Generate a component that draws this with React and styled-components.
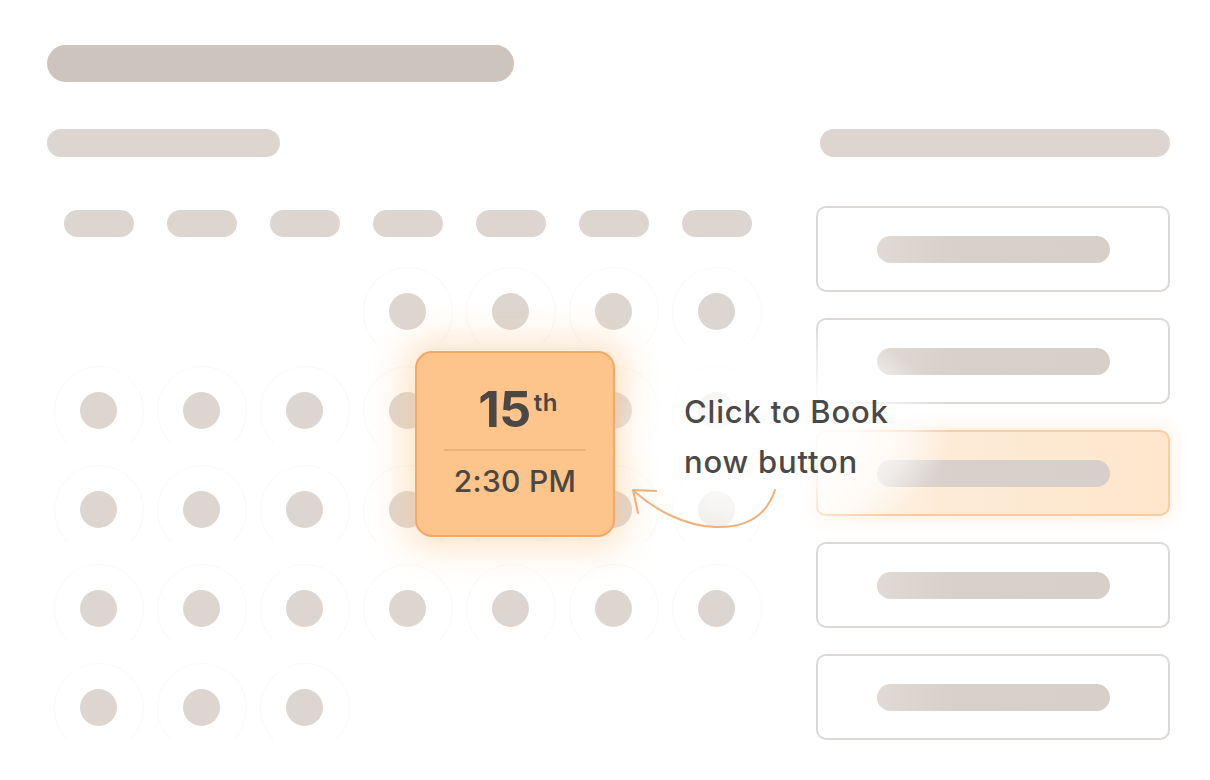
import React from 'react'
import styled, { createGlobalStyle } from 'styled-components'

const GlobalStyle = createGlobalStyle`
    html, body {
        margin: 0;
        padding: 0;
        background: #ffffff;
        font-family: Inter, "Liberation Sans", sans-serif;
    }
`

const Page = styled.div`
    position: relative;
    width: 1210px;
    height: 780px;
    box-sizing: border-box;
    padding: 45px 40px 0 47px;
    overflow: hidden;
`

const Bar = styled.div`
    width: ${p => p.w}px;
    height: ${p => p.h || 27}px;
    border-radius: 999px;
    background: ${p => p.color || '#ddd6d0'};
    margin-left: ${p => p.ml || 0}px;
`

const Body = styled.div`
    display: flex;
    gap: 48px;
    margin-top: 47px;
`

const Calendar = styled.div`
    width: 721px;
    display: flex;
    flex-direction: column;
`

const DayRow = styled.div`
    display: grid;
    grid-template-columns: repeat(7, 103px);
    margin-top: 53px;
    justify-items: center;
`

const DotGrid = styled.div`
    display: grid;
    grid-template-columns: repeat(7, 103px);
    grid-auto-rows: 99px;
    margin-top: 25px;
`

const Cell = styled.div`
    position: relative;
    display: flex;
    align-items: center;
    justify-content: center;

    ${p => p.filled && `
    &::before {
        content: '';
        position: absolute;
        width: 88px;
        height: 88px;
        border-radius: 50%;
        border: 1.5px solid rgba(214, 206, 200, 0.12);
        border-bottom-color: transparent;
    }
    `}
`

const Dot = styled.div`
    width: 37px;
    height: 37px;
    border-radius: 50%;
    background: #ddd6d0;
    opacity: ${p => (p.faint ? 0.45 : 1)};
`

const Side = styled.div`
    width: 354px;
    display: flex;
    flex-direction: column;
`

const SlotList = styled.div`
    display: flex;
    flex-direction: column;
    gap: 26px;
    margin-top: 49px;
`

const Slot = styled.div`
    height: 86px;
    box-sizing: border-box;
    border: 2px solid ${p => (p.active ? '#f8cd9f' : '#dcd8d5')};
    border-radius: 10px;
    display: flex;
    align-items: center;
    justify-content: center;
    background: ${p => (p.active
        ? 'linear-gradient(90deg, #fffaf4 0%, #fdebd6 35%, #fde6cc 100%)'
        : '#ffffff')};
    box-shadow: ${p => (p.active ? '0 0 18px rgba(253, 205, 160, 0.45)' : 'none')};
`

const SlotBar = styled.div`
    width: 233px;
    height: 27px;
    border-radius: 999px;
    background: linear-gradient(90deg, #e0d9d4 0%, #d7d0cb 30%, #d7cfca 100%);
`

const DateCard = styled.div`
    position: absolute;
    left: 415px;
    top: 351px;
    width: 200px;
    height: 186px;
    box-sizing: border-box;
    border-radius: 17px;
    border: 2px solid #f1a963;
    background: #fdc58c;
    box-shadow: 0 0 34px 12px rgba(253, 196, 140, 0.45);
    display: flex;
    flex-direction: column;
    align-items: center;
    color: #4a4744;
    z-index: 2;
`

const Day = styled.div`
    margin-top: 27px;
    padding-left: 6px;
    font-size: 50px;
    font-weight: 700;
    line-height: 58px;
    letter-spacing: -0.5px;

    sup {
        font-size: 24px;
        font-weight: 600;
        vertical-align: top;
        position: relative;
        top: -6px;
        margin-left: 3px;
        letter-spacing: 0.5px;
    }
`

const Divider = styled.div`
    width: 142px;
    height: 2px;
    background: #e9a869;
    opacity: 0.7;
    margin-top: 11px;
`

const Time = styled.div`
    margin-top: 12px;
    font-size: 30px;
    font-weight: 500;
    line-height: 36px;
    letter-spacing: 0.3px;
`

const Hint = styled.div`
    position: absolute;
    left: 684px;
    top: 387px;
    font-size: 31px;
    font-weight: 500;
    line-height: 50px;
    letter-spacing: 0.8px;
    color: #4b4947;
    z-index: 3;

    &::before {
        content: '';
        position: absolute;
        left: -70px;
        top: -60px;
        right: -60px;
        bottom: -50px;
        background: radial-gradient(ellipse at center, rgba(255,255,255,0.9) 30%, rgba(255,255,255,0.5) 55%, rgba(255,255,255,0) 72%);
        z-index: -1;
    }
`

const Arrow = styled.svg`
    position: absolute;
    left: 620px;
    top: 470px;
    z-index: 3;
`

const rows = [
    [0, 0, 0, 1, 1, 1, 1],
    [1, 1, 1, 1, 1, 1, 1],
    [1, 1, 1, 1, 1, 1, 2],
    [1, 1, 1, 1, 1, 1, 1],
    [1, 1, 1, 0, 0, 0, 0],
]

const App = () => {
    return (
        <Page>
            <GlobalStyle />
            <Bar w={467} h={37} color="#cdc4bd" />
            <Body>
                <Calendar>
                    <Bar w={233} h={28} />
                    <DayRow>
                        {Array.from({ length: 7 }).map((_, i) => (
                            <Bar key={i} w={70} h={27} />
                        ))}
                    </DayRow>
                    <DotGrid>
                        {rows.flat().map((v, i) => (
                            <Cell key={i} filled={v > 0}>
                                {v > 0 && <Dot faint={v === 2} />}
                            </Cell>
                        ))}
                    </DotGrid>
                </Calendar>
                <Side>
                    <Bar w={350} h={28} ml={4} />
                    <SlotList>
                        {[0, 1, 2, 3, 4].map(i => (
                            <Slot key={i} active={i === 2}>
                                <SlotBar />
                            </Slot>
                        ))}
                    </SlotList>
                </Side>
            </Body>

            <DateCard>
                <Day>15<sup>th</sup></Day>
                <Divider />
                <Time>2:30 PM</Time>
            </DateCard>

            <Hint>
                Click to Book<br />now button
            </Hint>

            <Arrow width="170" height="70" viewBox="0 0 170 70">
                <g fill="none" stroke="#f0b07a" strokeWidth="2" strokeLinecap="round" strokeLinejoin="round">
                    <path d="M155 20 C145 50 120 58 95 57 C65 56 35 40 14 21" />
                    <path d="M36 21 L13 20 L18 43" />
                </g>
            </Arrow>
        </Page>
    )
}

export default App
